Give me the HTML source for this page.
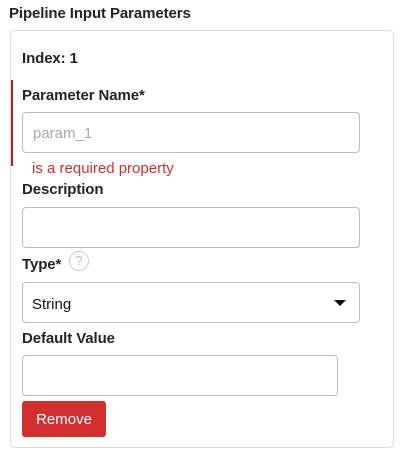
<!DOCTYPE html>
<html><head><style>
body{margin:0;width:416px;height:458px;background:#fff;font-family:"Liberation Sans",sans-serif;color:#212529;position:relative;overflow:hidden}
.a{position:absolute}
.b{font-weight:bold;font-size:15px;letter-spacing:-0.1px}
.in{position:absolute;box-sizing:border-box;border:1px solid #bdbdbd;border-radius:4px;background:#fff}
</style></head><body>
<div class="a b" style="left:9px;top:5px">Pipeline Input Parameters</div>
<div class="a" style="left:10px;top:30px;width:384px;height:418px;box-sizing:border-box;border:1px solid #dcdcdc;border-radius:5px"></div>
<div class="a b" style="left:22px;top:50px">Index: 1</div>
<div class="a" style="left:11px;top:80px;width:2px;height:86px;background:#b71c1c"></div>
<div class="a b" style="left:22px;top:87px">Parameter Name*</div>
<div class="in" style="left:22px;top:112px;width:338px;height:41px"></div>
<div class="a" style="left:33px;top:125px;font-size:15px;color:#aaa">param_1</div>
<div class="a" style="left:32px;top:160px;font-size:15px;color:#d32f2f">is a required property</div>
<div class="a b" style="left:22px;top:181px">Description</div>
<div class="in" style="left:22px;top:207px;width:338px;height:41px"></div>
<div class="a b" style="left:22px;top:256px">Type*</div>
<div class="a" style="left:69px;top:251px;width:20px;height:20px;box-sizing:border-box;border:1px solid #ccc;border-radius:50%;color:#bbb;font-size:13px;text-align:center;line-height:18px">?</div>
<div class="in" style="left:22px;top:282px;width:338px;height:41px"></div>
<div class="a" style="left:32px;top:296px;font-size:15px;color:#111">String</div>
<div class="a" style="left:334px;top:300px;width:0;height:0;border-left:6px solid transparent;border-right:6px solid transparent;border-top:6px solid #111"></div>
<div class="a b" style="left:22px;top:330px">Default Value</div>
<div class="in" style="left:22px;top:355px;width:316px;height:41px"></div>
<div class="a" style="left:22px;top:401px;width:84px;height:36px;background:#d32f2f;border-radius:3px;color:#fff;font-size:15px;text-align:center;line-height:38px">Remove</div>
</body></html>
